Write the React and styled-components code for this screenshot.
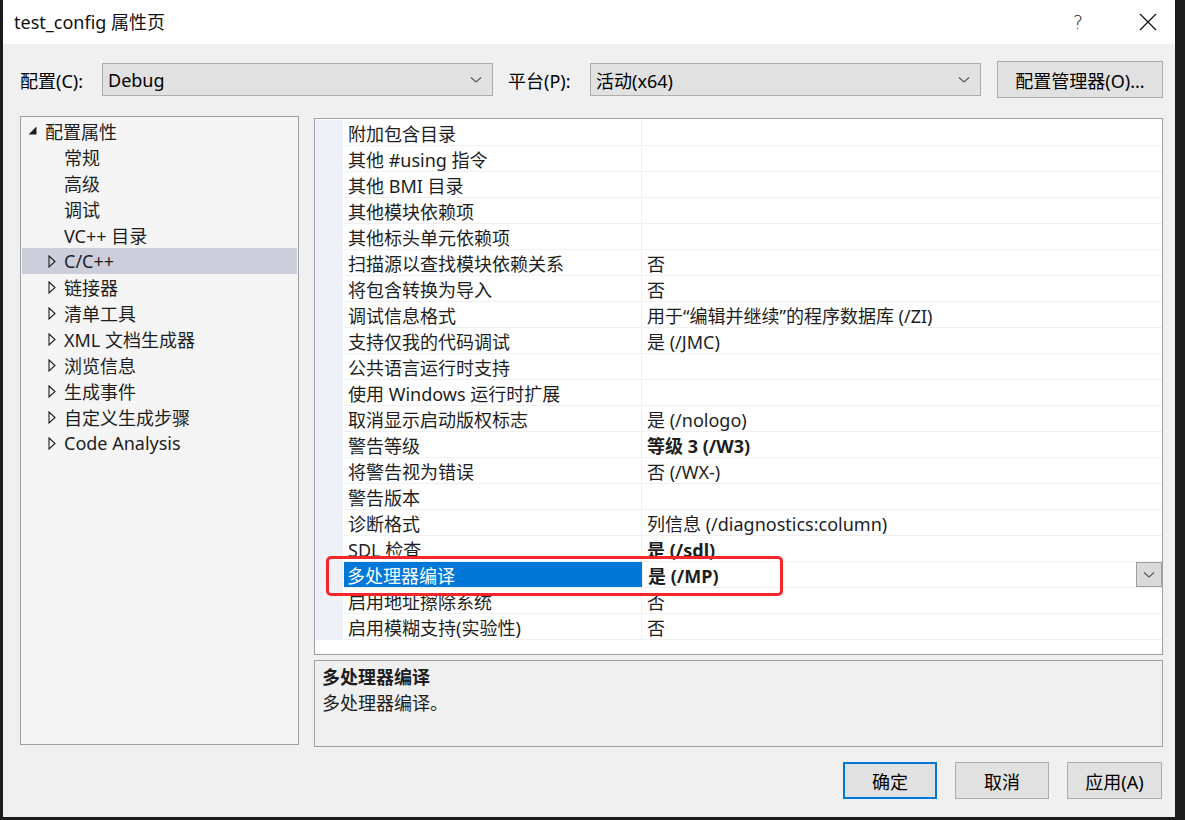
import styled, { createGlobalStyle } from "styled-components";

const GlobalStyle = createGlobalStyle`
  html, body { margin: 0; padding: 0; background: #1c1c1c; }
  body { font-family: "Noto Sans", "Noto Sans CJK SC", sans-serif; font-size: 18px; color: #000; }
  * { box-sizing: border-box; }
`;

const tree = [
  { label: "配置属性", level: 0, open: true },
  { label: "常规", level: 1 },
  { label: "高级", level: 1 },
  { label: "调试", level: 1 },
  { label: "VC++ 目录", level: 1 },
  { label: "C/C++", level: 1, closed: true, selected: true },
  { label: "链接器", level: 1, closed: true },
  { label: "清单工具", level: 1, closed: true },
  { label: "XML 文档生成器", level: 1, closed: true },
  { label: "浏览信息", level: 1, closed: true },
  { label: "生成事件", level: 1, closed: true },
  { label: "自定义生成步骤", level: 1, closed: true },
  { label: "Code Analysis", level: 1, closed: true },
];

const props = [
  ["附加包含目录", ""],
  ["其他 #using 指令", ""],
  ["其他 BMI 目录", ""],
  ["其他模块依赖项", ""],
  ["其他标头单元依赖项", ""],
  ["扫描源以查找模块依赖关系", "否"],
  ["将包含转换为导入", "否"],
  ["调试信息格式", "用于“编辑并继续”的程序数据库 (/ZI)"],
  ["支持仅我的代码调试", "是 (/JMC)"],
  ["公共语言运行时支持", ""],
  ["使用 Windows 运行时扩展", ""],
  ["取消显示启动版权标志", "是 (/nologo)"],
  ["警告等级", "等级 3 (/W3)", true],
  ["将警告视为错误", "否 (/WX-)"],
  ["警告版本", ""],
  ["诊断格式", "列信息 (/diagnostics:column)"],
  ["SDL 检查", "是 (/sdl)", true],
  ["多处理器编译", "是 (/MP)", true, true],
  ["启用地址擦除系统", "否"],
  ["启用模糊支持(实验性)", "否"],
];

function Chevron() {
  return (
    <svg width="12" height="8" viewBox="0 0 12 8">
      <path d="M1 1.5 L6 6 L11 1.5" fill="none" stroke="#555" strokeWidth="1.1" />
    </svg>
  );
}

function App() {
  return (
    <>
      <GlobalStyle />
      <Window>
        <TitleBar>
          <Title>test_config 属性页</Title>
          <TitleButtons>
            <Help>?</Help>
            <svg width="18" height="18" viewBox="0 0 18 18">
              <path d="M1 1 L17 17 M17 1 L1 17" stroke="#111" strokeWidth="1.2" />
            </svg>
          </TitleButtons>
        </TitleBar>
        <Body>
          <ConfigRow>
            <Label>配置(C):</Label>
            <Select>
              <span>Debug</span>
              <Chevron />
            </Select>
            <Label $left={15}>平台(P):</Label>
            <Select>
              <span>活动(x64)</span>
              <Chevron />
            </Select>
            <Button $w={166} $left={16}>配置管理器(O)...</Button>
          </ConfigRow>
          <Main>
            <Tree>
              {tree.map((t) => (
                <TreeRow key={t.label} $selected={t.selected}>
                  <Arrow $level={t.level}>
                    {t.open && (
                      <svg width="9" height="9" viewBox="0 0 9 9">
                        <path d="M8.5 0.5 L8.5 8.5 L0.5 8.5 Z" fill="#1e1e1e" />
                      </svg>
                    )}
                    {t.closed && (
                      <svg width="8" height="13" viewBox="0 0 8 13">
                        <path d="M1 1 L7 6.5 L1 12 Z" fill="none" stroke="#1e1e1e" strokeWidth="1.1" />
                      </svg>
                    )}
                  </Arrow>
                  {t.label}
                </TreeRow>
              ))}
            </Tree>
            <RightCol>
              <Grid>
                {props.map(([name, value, bold, selected]) => (
                  <PropRow key={name}>
                    <Gutter />
                    <NameCell $selected={selected}>{name}</NameCell>
                    <ValueCell $bold={bold}>
                      {value}
                      {selected && (
                        <DropBtn>
                          <Chevron />
                        </DropBtn>
                      )}
                    </ValueCell>
                  </PropRow>
                ))}
                <Highlight />
              </Grid>
              <Desc>
                <DescTitle>多处理器编译</DescTitle>
                <div>多处理器编译。</div>
              </Desc>
            </RightCol>
          </Main>
          <Footer>
            <Button $w={94} $primary>确定</Button>
            <Button $w={94} $left={18}>取消</Button>
            <Button $w={95} $left={18}>应用(A)</Button>
          </Footer>
        </Body>
      </Window>
    </>
  );
}

const Window = styled.div`
  margin-left: 3px;
  width: 1172px;
  height: 817px;
  background: #f0f0f0;
  display: flex;
  flex-direction: column;
`;

const TitleBar = styled.div`
  height: 44px;
  background: #fff;
  display: flex;
  align-items: center;
  justify-content: space-between;
  padding: 0 18px 0 11px;
`;

const Title = styled.div`
  font-size: 18px;
  color: #111;
  margin-top: -2px;
`;

const TitleButtons = styled.div`
  display: flex;
  align-items: center;
  gap: 56px;
`;

const Help = styled.span`
  font-family: "DejaVu Sans", sans-serif;
  font-weight: 300;
  font-size: 19px;
  color: #222;
`;

const Body = styled.div`
  flex: 1;
  padding: 17px 12px 18px 17px;
  display: flex;
  flex-direction: column;
`;

const ConfigRow = styled.div`
  display: flex;
  align-items: center;
  height: 37px;
`;

const Label = styled.div`
  width: 82px;
  margin-left: ${(p) => p.$left || 0}px;
`;

const Select = styled.div`
  width: 391px;
  height: 33px;
  background: #e1e1e1;
  border: 1px solid #adadad;
  display: flex;
  align-items: center;
  justify-content: space-between;
  padding: 0 10px 0 5px;
`;

const Button = styled.div`
  width: ${(p) => p.$w}px;
  height: 37px;
  margin-left: ${(p) => p.$left || 0}px;
  background: #e1e1e1;
  border: ${(p) => (p.$primary ? "2px solid #0078d7" : "1px solid #adadad")};
  display: flex;
  align-items: center;
  justify-content: center;
`;

const Main = styled.div`
  display: flex;
  margin-top: 18px;
  height: 631px;
  gap: 15px;
`;

const Tree = styled.div`
  width: 279px;
  height: 629px;
  background: #f5f5f5;
  border: 1px solid #a0a0a0;
  padding: 1px;
`;

const TreeRow = styled.div`
  height: 26px;
  display: flex;
  align-items: center;
  background: ${(p) => (p.$selected ? "#cccedb" : "transparent")};
  color: #1e1e1e;
`;

const Arrow = styled.div`
  width: ${(p) => (p.$level ? 42 : 23)}px;
  padding-left: ${(p) => (p.$level ? 26 : 6)}px;
  display: flex;
  align-items: center;
  margin-top: ${(p) => (p.$level ? 0 : -2)}px;
`;

const RightCol = styled.div`
  flex: 1;
  display: flex;
  flex-direction: column;
  gap: 5px;
  padding-top: 2px;
`;

const Grid = styled.div`
  position: relative;
  height: 537px;
  background: #fff;
  border: 1px solid #a0a0a0;
  padding-top: 1px;
`;

const PropRow = styled.div`
  display: flex;
  height: 26px;
`;

const Gutter = styled.div`
  width: 28px;
  background: #eef1f7;
`;

const NameCell = styled.div`
  width: 299px;
  padding-left: ${(p) => (p.$selected ? 3 : 5)}px;
  margin-left: ${(p) => (p.$selected ? 1 : 0)}px;
  display: flex;
  align-items: center;
  border-bottom: 1px solid #f0f0f0;
  border-right: 1px solid #f0f0f0;
  background: ${(p) => (p.$selected ? "#0078d7" : "#fff")};
  color: ${(p) => (p.$selected ? "#fff" : "#1e1e1e")};
`;

const ValueCell = styled.div`
  flex: 1;
  position: relative;
  display: flex;
  align-items: center;
  padding-left: 5px;
  border-bottom: 1px solid #f0f0f0;
  font-weight: ${(p) => (p.$bold ? 700 : 400)};
  color: #1e1e1e;
`;

const DropBtn = styled.div`
  position: absolute;
  right: 0;
  top: 0;
  width: 26px;
  height: 25px;
  background: #dadada;
  border: 1px solid #a0a0a0;
  display: flex;
  align-items: center;
  justify-content: center;
`;

const Highlight = styled.div`
  position: absolute;
  left: 11px;
  top: 437px;
  width: 457px;
  height: 40px;
  border: 3px solid #f5262a;
  border-radius: 5px;
  pointer-events: none;
`;

const Desc = styled.div`
  height: 87px;
  background: #f0f0f0;
  border: 1px solid #a0a0a0;
  padding: 3px 7px;
  line-height: 26px;
  color: #1e1e1e;
`;

const DescTitle = styled.div`
  font-weight: 700;
`;

const Footer = styled.div`
  display: flex;
  justify-content: flex-end;
  margin-top: 15px;
  padding-right: 1px;
`;

export default App;
